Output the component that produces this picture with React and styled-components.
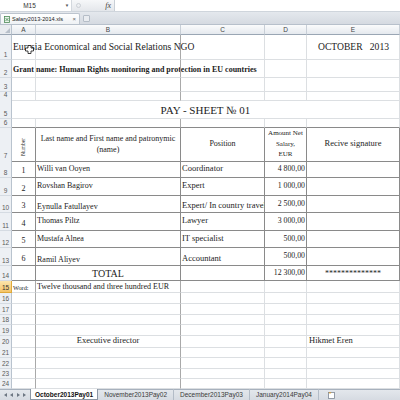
import React from "react"
import styled, { createGlobalStyle } from 'styled-components'

const GRID = '#dcdfe2';
const LINE = '#8a8a8a';
const SOFT = '#a9a9a9';
const COLS = '12px 24px 145px 84px 42px 1fr';

const GlobalStyle = createGlobalStyle`
  * { box-sizing: border-box; }
  html, body { margin: 0; padding: 0; background: #fff; }
  body { font-family: "Liberation Serif", "Times New Roman", serif; }
`;

const Frame = styled.div`
  width: 400px;
  height: 400px;
  overflow: hidden;
  display: flex;
  flex-direction: column;
  background: #fff;
`;

const FormulaBar = styled.div`
  height: 12px;
  display: flex;
  border-bottom: 1px solid #cfd5dc;
  font-family: "Liberation Sans", Arial, sans-serif;
`;

const NameBox = styled.div`
  width: 72px;
  display: flex;
  align-items: center;
  font-size: 6.5px;
  color: #333;
  border-right: 1px solid #d3d8de;
`;

const NameText = styled.span`
  flex: 1;
  text-align: center;
  padding-right: 4px;
`;

const NameArrow = styled.span`
  width: 8px;
  font-size: 4.5px;
  color: #555;
  text-align: center;
`;

const FxZone = styled.div`
  width: 42px;
  display: flex;
  align-items: center;
  justify-content: space-between;
  padding: 0 3px 0 4px;
  background: linear-gradient(#f6f7f9, #e4e7eb);
`;

const FxLabel = styled.span`
  font-family: "Liberation Serif", serif;
  font-style: italic;
  font-size: 8px;
  color: #444;
`;

const FormulaInput = styled.div`
  flex: 1;
  background: #fff;
  border-left: 1px solid #c9cfd6;
`;

const DocBar = styled.div`
  height: 13px;
  display: flex;
  align-items: flex-end;
  gap: 3px;
  background: linear-gradient(#e4e8ed, #d5dae1);
  border-bottom: 1px solid #b7c0cb;
  font-family: "Liberation Sans", Arial, sans-serif;
`;

const DocTab = styled.div`
  height: 11px;
  width: 80px;
  display: flex;
  align-items: center;
  gap: 2px;
  padding: 0 3px;
  background: linear-gradient(#ffffff, #eef1f4);
  border: 1px solid #bcc4ce;
  border-bottom: none;
  border-radius: 2px 2px 0 0;
  font-size: 5.6px;
  color: #222;
`;

const DocClose = styled.span`
  margin-left: auto;
  color: #666;
  font-size: 6px;
`;

const NewDoc = styled.div`
  width: 7px;
  height: 7px;
  margin-bottom: 2px;
  border: 1px solid #b5bdc7;
  background: #e9ecf0;
  border-radius: 1px;
`;

const HeadRow = styled.div`
  display: grid;
  grid-template-columns: ${COLS};
  height: 10px;
  font-family: "Liberation Sans", Arial, sans-serif;
  font-size: 6.5px;
  color: #444;
`;

const Corner = styled.div`
  display: flex;
  align-items: flex-end;
  justify-content: flex-end;
  padding: 1px;
  background: #e8ebef;
  border-right: 1px solid #b9c3ce;
  border-bottom: 1px solid #9aa6b4;
`;

const ColHead = styled.div`
  display: flex;
  align-items: center;
  justify-content: center;
  background: linear-gradient(#fafbfc, #e5e9ee);
  border-right: 1px solid #c8cfd7;
  border-bottom: 1px solid #9aa6b4;
`;

const SheetRow = styled.div`
  display: grid;
  grid-template-columns: ${COLS};
  height: ${p => p.$h}px;
`;

const RowNum = styled.div`
  display: flex;
  align-items: flex-end;
  justify-content: center;
  padding-bottom: 1px;
  font-family: "Liberation Sans", Arial, sans-serif;
  font-size: 6.5px;
  line-height: 1;
  color: ${p => p.$sel ? '#333' : '#5a5a5a'};
  background: ${p => p.$sel ? 'linear-gradient(#fce6ad, #f5c468)' : '#edf0f4'};
  border-right: 1px solid ${p => p.$sel ? '#e0a93a' : '#b9c3ce'};
  border-bottom: 1px solid ${p => p.$sel ? '#e0a93a' : '#d5dbe2'};
`;

const FLEX = { start: 'flex-start', center: 'center', end: 'flex-end' };

const Cell = styled.div`
  grid-column: span ${p => p.$span};
  min-width: 0;
  display: flex;
  align-items: ${p => FLEX[p.$v]};
  justify-content: ${p => FLEX[p.$h]};
  text-align: ${p => p.$h === 'center' ? 'center' : p.$h === 'end' ? 'right' : 'left'};
  padding: ${p => p.$pad};
  border-right: 1px solid ${p => p.$rc};
  border-bottom: 1px solid ${p => p.$bc};
  font-size: ${p => p.$fs}px;
  font-weight: ${p => p.$bold ? 700 : 400};
  line-height: ${p => p.$lh};
  white-space: pre;
  overflow: ${p => p.$clip ? 'hidden' : 'visible'};
  position: ${p => p.$rel ? 'relative' : 'static'};
  color: #1c1c1c;
`;

const VerticalLabel = styled.span`
  writing-mode: vertical-rl;
  transform: rotate(180deg);
  font-size: 5.5px;
`;

const CursorMark = styled.svg`
  position: absolute;
  left: 13px;
  top: 10px;
`;

const TabBar = styled.div`
  height: 11px;
  display: flex;
  align-items: stretch;
  background: linear-gradient(#e3e7ec, #d6dbe2);
  border-top: 1px solid #a7b1bd;
  font-family: "Liberation Sans", Arial, sans-serif;
  font-size: 6.5px;
  color: #3a3a3a;
`;

const TabNav = styled.div`
  width: 30px;
  display: flex;
  align-items: center;
  justify-content: space-around;
  padding: 0 2px;
`;

const SheetTab = styled.div`
  display: flex;
  align-items: center;
  padding: 0 ${p => p.$active ? 4 : 6}px;
  margin-top: -1px;
  ${p => p.$active
    ? 'background: #fff; font-weight: 700; color: #111; border: 1px solid #8c97a4; border-top: none;'
    : 'border-right: 1px solid #b3bcc7;'}
`;

const NewSheet = styled.div`
  display: flex;
  align-items: center;
  padding-left: 8px;
`;

const staff = [
  ['1', 'Willi van Ooyen', 'Coordinator', '4 800,00', 'center', 17],
  ['2', 'Rovshan Bagirov', 'Expert', '1 000,00', 'center', 18],
  ['3', 'Eynulla Fatullayev', 'Expert/ In country travel', '2 500,00', 'end', 17],
  ['4', 'Thomas Piltz', 'Lawyer', '3 000,00', 'center', 18],
  ['5', 'Mustafa Alnea', 'IT specialist', '500,00', 'center', 17],
  ['6', 'Ramil Aliyev', 'Accountant', '500,00', 'end', 18],
];

const rows = [
  { n: 1, h: 25, cells: [
    { t: 'Eurasia Economical and Social Relations NGO', fs: 9.6, v: 'center', pad: '0 1px', cursor: true },
    null, null, null,
    { t: 'OCTOBER   2013', fs: 9.6, v: 'center', pad: '0 0 0 11px' },
  ] },
  { n: 2, h: 18, cells: [
    { t: 'Grant name: Human Rights monitoring and protection in EU countries', fs: 8, bold: true, pad: '0 1px 3px' },
  ] },
  { n: 3, h: 14 },
  { n: 4, h: 8 },
  { n: 5, h: 19, cells: [
    { t: 'PAY - SHEET № 01', fs: 11, span: 5, h: 'center', pad: '0 0 1px' },
  ] },
  { n: 6, h: 9 },
  { n: 7, h: 33, cells: [
    { t: <VerticalLabel>Number</VerticalLabel>, h: 'center', v: 'center', pad: '6px 0 0' },
    { t: 'Last name and First name and patronymic\n(name)', h: 'center', v: 'center', lh: 1.4 },
    { t: 'Position', h: 'center', v: 'center' },
    { t: 'Amount Net\nSalary,\nEUR', fs: 7, lh: 1.5, h: 'center', v: 'center' },
    { t: 'Recive signature', fs: 8.5, h: 'center', v: 'center' },
  ] },
  ...staff.map(([num, name, pos, sum, v, h], i) => ({
    n: 8 + i, h, cells: [
      { t: num, h: 'center', pad: '0 0 2px' },
      { t: name, v, pad: '0 1px 1px' },
      { t: pos, v, fs: 8.5, clip: true, pad: '0 0 1px 1px' },
      { t: sum, v: 'center', h: 'end', fs: 7.8, pad: '0 1px 0 0' },
      null,
    ],
  })),
  { n: 14, h: 15, cells: [
    null,
    { t: 'TOTAL', fs: 10, h: 'center', v: 'center', pad: '1px 0 0' },
    null,
    { t: '12 300,00', fs: 7.8, h: 'end', v: 'center', pad: '0 1px 0 0' },
    { t: '**************', h: 'center', v: 'center', pad: '2px 0 0' },
  ] },
  { n: 15, h: 12, cells: [
    { t: 'Word:', fs: 6.3, pad: '0 1px 1px' },
    { t: 'Twelve thousand and three hundred EUR', pad: '0 1px 1px' },
  ] },
  ...[11, 11, 10, 11, 11, 11, 11, 10, 10].map((h, i) => {
    const n = 16 + i;
    if (n !== 20) return { n, h };
    return { n, h, cells: [
      null,
      { t: 'Executive director', fs: 8.5, h: 'center', pad: '0 0 1px' },
      null, null,
      { t: 'Hikmet Eren', fs: 8.5, pad: '0 0 1px 2px' },
    ] };
  }),
];

function borders(n, col) {
  const inTable = n >= 7 && n <= 14;
  let rc = GRID;
  let bc = GRID;
  if (inTable) { rc = LINE; bc = LINE; }
  if (n === 6) bc = LINE;
  if (!inTable && col === 1) rc = SOFT;
  if (n > 14 && col === 0) rc = SOFT;
  return { rc, bc };
}

function Row({ row }) {
  const list = row.cells || [];
  const out = [];
  let col = 0;
  let i = 0;
  while (col < 5) {
    const c = list[i] || {};
    i++;
    const span = c.span || 1;
    const { rc, bc } = borders(row.n, col + span - 1);
    out.push(
      <Cell
        key={col}
        $span={span}
        $rc={rc}
        $bc={bc}
        $fs={c.fs || 8}
        $h={c.h || 'start'}
        $v={c.v || 'end'}
        $pad={c.pad || '0 1px 1px'}
        $lh={c.lh || 1.15}
        $bold={c.bold}
        $clip={c.clip}
        $rel={c.cursor}
      >
        {c.t}
        {c.cursor && (
          <CursorMark width="9" height="9" viewBox="0 0 9 9">
            <path d="M3 .5h3V3h2.5v3H6v2.5H3V6H.5V3H3z" fill="#fff" stroke="#111" strokeWidth=".8" />
          </CursorMark>
        )}
      </Cell>
    );
    col += span;
  }
  return (
    <SheetRow $h={row.h}>
      <RowNum $sel={row.n === 15}>{row.n}</RowNum>
      {out}
    </SheetRow>
  );
}

const Tri = ({ dir }) => (
  <svg width="3" height="4" viewBox="0 0 3 4">
    <path d={dir === 'l' ? 'M3 0v4L0 2z' : 'M0 0v4l3-2z'} fill="#6d7783" />
  </svg>
);

export default function App() {
  return (
    <Frame>
      <GlobalStyle />
      <FormulaBar>
        <NameBox>
          <NameText>M15</NameText>
          <NameArrow>▼</NameArrow>
        </NameBox>
        <FxZone>
          <svg width="5" height="7" viewBox="0 0 5 7">
            <circle cx="2.5" cy="3.5" r="2" fill="none" stroke="#c3c8ce" strokeWidth=".8" />
          </svg>
          <FxLabel>fx</FxLabel>
        </FxZone>
        <FormulaInput />
      </FormulaBar>

      <DocBar>
        <DocTab>
          <svg width="6" height="7" viewBox="0 0 6 7">
            <rect x=".5" y=".5" width="5" height="6" fill="#e9f3ea" stroke="#4d8a57" strokeWidth=".8" />
            <path d="M1.5 2l3 3M4.5 2l-3 3" stroke="#2f7a3d" strokeWidth=".7" />
          </svg>
          <span>Salary2013-2014.xls</span>
          <DocClose>×</DocClose>
        </DocTab>
        <NewDoc />
      </DocBar>

      <HeadRow>
        <Corner>
          <svg width="5" height="5" viewBox="0 0 5 5">
            <path d="M5 0v5H0z" fill="#b8c0ca" />
          </svg>
        </Corner>
        {['A', 'B', 'C', 'D', 'E'].map(l => <ColHead key={l}>{l}</ColHead>)}
      </HeadRow>

      {rows.map(r => <Row key={r.n} row={r} />)}

      <TabBar>
        <TabNav>
          <Tri dir="l" /><Tri dir="l" /><Tri dir="r" /><Tri dir="r" />
        </TabNav>
        <SheetTab $active>October2013Pay01</SheetTab>
        <SheetTab>November2013Pay02</SheetTab>
        <SheetTab>December2013Pay03</SheetTab>
        <SheetTab>January2014Pay04</SheetTab>
        <NewSheet>
          <svg width="9" height="8" viewBox="0 0 9 8">
            <rect x="1.5" y="1.5" width="6" height="6" fill="#fff" stroke="#7d8793" strokeWidth=".8" />
            <path d="M2 1l1 1.5L4 1" stroke="#e0a030" strokeWidth=".8" fill="none" />
          </svg>
        </NewSheet>
      </TabBar>
    </Frame>
  )
}
